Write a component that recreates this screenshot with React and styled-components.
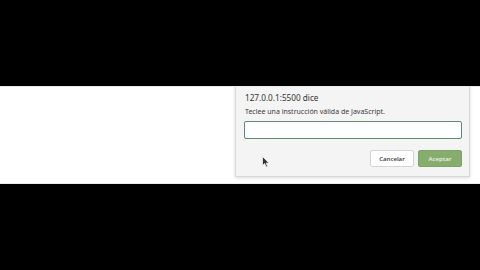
import * as React from 'react'
import styled, { createGlobalStyle } from 'styled-components'

const Global = createGlobalStyle`
    html, body {
        margin: 0;
        padding: 0;
        background: #000;
        width: 480px;
        height: 270px;
        overflow: hidden;
    }
`;

const Screen = styled.div`
    display: flex;
    flex-direction: column;
    width: 480px;
    height: 270px;
    background: #000;
`;
const Letterbox = styled.div`
    height: ${props => props.size}px;
    background: #000;
    flex-shrink: 0;
`;
const Page = styled.div`
    height: 98px;
    background: #fff;
    border-top: 1px solid #ececec;
    border-bottom: 1px solid #ececec;
    box-sizing: border-box;
    display: flex;
    justify-content: flex-end;
    align-items: flex-end;
    padding: 0 10px 6px 0;
    position: relative;
    overflow: hidden;
`;
const Dialog = styled.div`
    width: 235px;
    height: 100px;
    box-sizing: border-box;
    background: #f4f4f4;
    border: 1px solid #d8d8d8;
    box-shadow: 0 1px 3px rgba(0, 0, 0, 0.15);
    padding: 0 7px 9px 8px;
    display: flex;
    flex-direction: column;
    justify-content: flex-end;
    font-family: "Noto Sans", "DejaVu Sans", sans-serif;
    color: #3c3c3c;
`;
const Title = styled.div`
    font-size: 8.2px;
    line-height: 12px;
    color: #333;
    margin-bottom: 3px;
    padding-left: 1px;
`;
const Message = styled.div`
    font-size: 7px;
    line-height: 10px;
    color: #3a3a3a;
    margin-bottom: 4px;
    padding-left: 1px;
`;
const Input = styled.div`
    height: 18px;
    box-sizing: border-box;
    background: #fff;
    border: 1.5px solid #5f8a74;
    border-radius: 2px;
    margin-bottom: 11px;
`;
const Buttons = styled.div`
    display: flex;
    justify-content: flex-end;
    gap: 4px;
`;
const Button = styled.div`
    width: 44px;
    height: 17px;
    box-sizing: border-box;
    border-radius: 2px;
    display: flex;
    align-items: center;
    justify-content: center;
    font-size: 6px;
    font-weight: 600;
    background: ${props => props.primary ? '#87ad6e' : '#fff'};
    color: ${props => props.primary ? '#e8f0e0' : '#444'};
    border: 1px solid ${props => props.primary ? '#7ea366' : '#d4d4d4'};
`;
const Cursor = styled.svg`
    position: absolute;
    left: 262px;
    top: 69px;
`;

export default function App() {
    return (
        <Screen>
            <Global />
            <Letterbox size={86} />
            <Page>
                <Dialog>
                    <Title>127.0.0.1:5500 dice</Title>
                    <Message>Teclee una instrucción válida de JavaScript.</Message>
                    <Input />
                    <Buttons>
                        <Button>Cancelar</Button>
                        <Button primary>Aceptar</Button>
                    </Buttons>
                </Dialog>
                <Cursor width="8" height="12" viewBox="0 0 8 12">
                    <path d="M0.5 0.5 L0.5 9.5 L2.6 7.6 L4.2 11 L5.6 10.4 L4.1 7.1 L7 7.1 Z" fill="#333" stroke="#eee" strokeWidth="0.8" />
                </Cursor>
            </Page>
            <Letterbox size={86} />
        </Screen>
    )
}
